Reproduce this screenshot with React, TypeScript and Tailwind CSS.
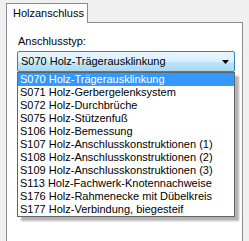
import { useState } from 'react';

const ITEMS = [
  'S070 Holz-Trägerausklinkung',
  'S071 Holz-Gerbergelenksystem',
  'S072 Holz-Durchbrüche',
  'S075 Holz-Stützenfuß',
  'S106 Holz-Bemessung',
  'S107 Holz-Anschlusskonstruktionen (1)',
  'S108 Holz-Anschlusskonstruktionen (2)',
  'S109 Holz-Anschlusskonstruktionen (3)',
  'S113 Holz-Fachwerk-Knotennachweise',
  'S176 Holz-Rahmenecke mit Dübelkreis',
  'S177 Holz-Verbindung, biegesteif',
];

const ArrowDown = () => (
  <svg width="7" height="4" viewBox="0 0 7 4" className="shrink-0">
    <path d="M0 0h7L3.5 4Z" fill="#000" />
  </svg>
);

export default function App() {
  const [selected] = useState(0);

  return (
    <div
      className="w-[249px] h-[241px] overflow-hidden bg-[#f0f0f0] pt-[3px] pl-[6px] text-[11px] leading-[13px] text-black"
      style={{ fontFamily: '"Liberation Sans", Arial, sans-serif' }}
    >
      {/* Tab */}
      <div className="relative z-10 -mb-px flex h-[20px] w-[82px] items-start border border-b-0 border-[#898c95] bg-white pl-[6px] pt-[3px]">
        Holzanschluss
      </div>

      {/* Tab page */}
      <div className="h-[230px] w-[237px] border border-[#898c95] bg-white pl-[10px] pt-[12px]">
        <div className="pl-px">Anschlusstyp:</div>

        <div className="relative mt-[3px] w-[218px]">
          {/* Combo box */}
          <div className="flex h-[21px] items-center justify-between rounded-[2px] border border-[#3c7fb1] bg-[linear-gradient(to_bottom,#eaf6fd_0%,#d9f0fc_50%,#bee6fd_50%,#a7d9f5_100%)] pl-[3px] pr-[5px]">
            <span>{ITEMS[selected]}</span>
            <ArrowDown />
          </div>

          {/* Drop-down list */}
          <ul className="absolute left-0 top-[21px] z-20 w-[218px] border border-[#646464] bg-white shadow-[4px_4px_2px_rgba(0,0,0,0.3)]">
            {ITEMS.map((item, i) => (
              <li
                key={item}
                className={
                  i === selected
                    ? 'h-[13px] whitespace-nowrap bg-[#3399ff] pl-[2px] text-white'
                    : 'h-[13px] whitespace-nowrap pl-[2px]'
                }
              >
                {item}
              </li>
            ))}
          </ul>
        </div>
      </div>
    </div>
  );
}
